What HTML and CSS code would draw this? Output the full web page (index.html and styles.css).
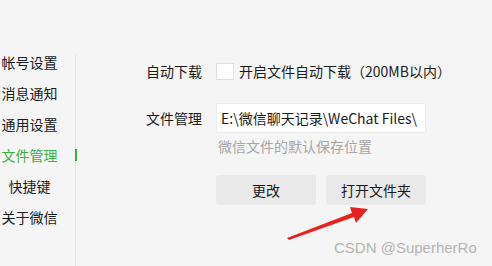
FILE: index.html
```html
<!DOCTYPE html>
<html lang="zh">
<head>
<meta charset="utf-8">
<link rel="stylesheet" href="styles.css">
</head>
<body>
<div class="window">
  <nav class="sidebar">
    <div class="nav-item">帐号设置</div>
    <div class="nav-item">消息通知</div>
    <div class="nav-item">通用设置</div>
    <div class="nav-item active">文件管理</div>
    <div class="nav-item">快捷键</div>
    <div class="nav-item">关于微信</div>
  </nav>
  <div class="divider"></div>
  <main class="content">
    <div class="row row-download">
      <span class="label">自动下载</span>
      <span class="checkbox"></span>
      <span class="check-text">开启文件自动下载（200MB以内）</span>
    </div>
    <div class="row row-path">
      <span class="label">文件管理</span>
      <div class="path-box">E:\微信聊天记录\WeChat Files\</div>
    </div>
    <div class="hint">微信文件的默认保存位置</div>
    <div class="buttons">
      <button class="btn">更改</button>
      <button class="btn">打开文件夹</button>
    </div>
  </main>
  <svg class="arrow" width="492" height="266" viewBox="0 0 492 266">
    <path d="M287 238 L352 213 L350 207 L368 209 L356 223 L354 217 L289 240 Z" fill="#e8231f"/>
  </svg>
  <div class="watermark">CSDN @SuperherRo</div>
</div>
</body>
</html>
```
FILE: styles.css
```css
html, body {
  margin: 0;
  padding: 0;
  background: #f5f5f5;
}
.window {
  position: relative;
  width: 492px;
  height: 266px;
  display: flex;
  overflow: hidden;
  font-family: "Noto Sans CJK SC", "Microsoft YaHei", sans-serif;
  font-size: 14px;
  color: #1a1a1a;
}
.sidebar {
  width: 75px;
  padding-top: 47px;
  flex: none;
}
.nav-item {
  position: relative;
  width: 59px;
  height: 31px;
  line-height: 31px;
  text-align: center;
  white-space: nowrap;
}
.nav-item.active {
  color: #3fae45;
}
.nav-item.active::after {
  content: "";
  position: absolute;
  left: 75px;
  top: 9px;
  width: 2px;
  height: 12px;
  background: #3fae45;
}
.divider {
  width: 1px;
  margin-top: 55px;
  background: #e2e2e2;
  flex: none;
}
.content {
  padding-left: 70px;
  padding-top: 61px;
  display: flex;
  flex-direction: column;
}
.row {
  display: flex;
  align-items: center;
}
.label {
  width: 70px;
  flex: none;
  white-space: nowrap;
}
.checkbox {
  width: 16px;
  height: 16px;
  border: 1px solid #e0e0e0;
  background: #fff;
  box-sizing: border-box;
  flex: none;
  width: 18px;
  height: 17px;
}
.check-text {
  margin-left: 5px;
  white-space: nowrap;
}
.row-path {
  margin-top: 22px;
}
.path-box {
  width: 210px;
  height: 30px;
  box-sizing: border-box;
  background: #fff;
  border: 1px solid #ececec;
  border-radius: 2px;
  padding-left: 4px;
  line-height: 28px;
  white-space: nowrap;
  overflow: hidden;
}
.hint {
  margin-top: 3px;
  margin-left: 72px;
  line-height: 20px;
  color: #a6a6a6;
}
.buttons {
  margin-top: 19px;
  margin-left: 70px;
  display: flex;
  gap: 10px;
}
.btn {
  width: 100px;
  height: 30px;
  border: none;
  border-radius: 3px;
  background: #e9e9e9;
  font-family: inherit;
  font-size: 14px;
  color: #1a1a1a;
  padding: 0;
}
.arrow {
  position: absolute;
  left: 0;
  top: 0;
  pointer-events: none;
}
.watermark {
  position: absolute;
  left: 334px;
  top: 239px;
  font-family: "Liberation Sans", Arial, sans-serif;
  font-size: 15px;
  color: #b4b4b4;
  white-space: nowrap;
}
```
